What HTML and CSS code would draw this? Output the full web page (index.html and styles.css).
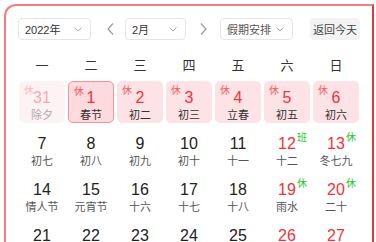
FILE: index.html
```html
<!DOCTYPE html>
<html lang="zh">
<head>
<meta charset="utf-8">
<link rel="stylesheet" href="styles.css">
</head>
<body>
<div class="frame">
  <div class="toolbar">
    <div class="select year"><span>2022年</span><svg class="chev" width="8" height="5" viewBox="0 0 8 5"><path d="M0.5 0.5 L4 4 L7.5 0.5" fill="none" stroke="#a8a8a8" stroke-width="1"/></svg></div>
    <div class="nav prev"><svg width="7" height="12" viewBox="0 0 7 12"><path d="M6 0.5 L1 6 L6 11.5" fill="none" stroke="#9a9a9a" stroke-width="1.2"/></svg></div>
    <div class="select month"><span>2月</span><svg class="chev" width="8" height="5" viewBox="0 0 8 5"><path d="M0.5 0.5 L4 4 L7.5 0.5" fill="none" stroke="#a8a8a8" stroke-width="1"/></svg></div>
    <div class="nav next"><svg width="7" height="12" viewBox="0 0 7 12"><path d="M1 0.5 L6 6 L1 11.5" fill="none" stroke="#9a9a9a" stroke-width="1.2"/></svg></div>
    <div class="select holiday"><span>假期安排</span><svg class="chev" width="8" height="5" viewBox="0 0 8 5"><path d="M0.5 0.5 L4 4 L7.5 0.5" fill="none" stroke="#a8a8a8" stroke-width="1"/></svg></div>
    <div class="today">返回今天</div>
  </div>
  <div class="weekdays">
    <span>一</span><span>二</span><span>三</span><span>四</span><span>五</span><span>六</span><span>日</span>
  </div>
  <div class="days">
    <div class="cell rest other"><i class="tag">休</i><b class="num red">31</b><em>除夕</em></div>
    <div class="cell rest selected"><i class="tag">休</i><b class="num red">1</b><em>春节</em></div>
    <div class="cell rest"><i class="tag">休</i><b class="num red">2</b><em>初二</em></div>
    <div class="cell rest"><i class="tag">休</i><b class="num red">3</b><em>初三</em></div>
    <div class="cell rest"><i class="tag">休</i><b class="num red">4</b><em>立春</em></div>
    <div class="cell rest"><i class="tag">休</i><b class="num red">5</b><em>初五</em></div>
    <div class="cell rest"><i class="tag">休</i><b class="num red">6</b><em>初六</em></div>

    <div class="cell"><b class="num">7</b><em>初七</em></div>
    <div class="cell"><b class="num">8</b><em>初八</em></div>
    <div class="cell"><b class="num">9</b><em>初九</em></div>
    <div class="cell"><b class="num">10</b><em>初十</em></div>
    <div class="cell"><b class="num">11</b><em>十一</em></div>
    <div class="cell"><b class="num red">12<sup>班</sup></b><em>十二</em></div>
    <div class="cell"><b class="num red">13<sup>休</sup></b><em>冬七九</em></div>

    <div class="cell"><b class="num">14</b><em>情人节</em></div>
    <div class="cell"><b class="num">15</b><em>元宵节</em></div>
    <div class="cell"><b class="num">16</b><em>十六</em></div>
    <div class="cell"><b class="num">17</b><em>十七</em></div>
    <div class="cell"><b class="num">18</b><em>十八</em></div>
    <div class="cell"><b class="num red">19<sup>休</sup></b><em>雨水</em></div>
    <div class="cell"><b class="num red">20<sup>休</sup></b><em>二十</em></div>

    <div class="cell"><b class="num">21</b><em>廿一</em></div>
    <div class="cell"><b class="num">22</b><em>廿二</em></div>
    <div class="cell"><b class="num">23</b><em>廿三</em></div>
    <div class="cell"><b class="num">24</b><em>廿四</em></div>
    <div class="cell"><b class="num">25</b><em>廿五</em></div>
    <div class="cell"><b class="num red">26</b><em>廿六</em></div>
    <div class="cell"><b class="num red">27</b><em>廿七</em></div>
  </div>
</div>
</body>
</html>
```

FILE: styles.css
```css
html, body {
  margin: 0;
  padding: 0;
  background: #fff;
  overflow: hidden;
}
body {
  font-family: "Liberation Sans", "Noto Sans CJK SC", sans-serif;
  color: #333;
}
.frame {
  margin: 4px 0 0 4px;
  width: 370px;
  height: 300px;
  border-top: 2px solid #ef7f80;
  border-left: 2px solid #ef7f80;
  border-right: 2px solid #e5393f;
  border-top-left-radius: 12px;
  padding: 12px 0 0 12px;
  box-sizing: border-box;
}
.toolbar {
  display: flex;
  align-items: center;
  height: 22px;
}
.select {
  height: 22px;
  box-sizing: border-box;
  border: 1px solid #e6e6e6;
  border-radius: 4px;
  display: flex;
  align-items: center;
  justify-content: space-between;
  padding: 0 8px 0 6px;
  font-size: 11px;
  color: #333;
}
.year { width: 73px; }
.month { width: 61px; }
.holiday { width: 73px; color: #555; }
.nav {
  width: 34px;
  height: 22px;
  display: flex;
  align-items: center;
  justify-content: center;
}
.prev { padding-left: 4px; box-sizing: border-box; }
.today {
  margin-left: 17px;
  width: 50px;
  height: 22px;
  border-radius: 4px;
  background: #f3f3f3;
  font-size: 11px;
  color: #444;
  display: flex;
  align-items: center;
  justify-content: center;
}
.weekdays, .days {
  display: grid;
  grid-template-columns: repeat(7, 46px);
  column-gap: 3px;
  margin-left: 1px;
}
.weekdays {
  margin-top: 16px;
  height: 20px;
  align-items: center;
  font-size: 13px;
  color: #333;
}
.weekdays span { text-align: center; line-height: 20px; }
.days {
  margin-top: 5px;
  row-gap: 4px;
}
.cell {
  position: relative;
  height: 42px;
  box-sizing: border-box;
  border-radius: 5px;
  padding-top: 8px;
  display: flex;
  flex-direction: column;
  align-items: center;
}
.cell.rest { background: #fde3e5; }
.cell.selected {
  background: #fcdadd;
  border: 1px solid #f09495;
  padding-top: 7px;
}
.cell.other { opacity: 0.42; }
.num {
  position: relative;
  font-weight: normal;
  font-size: 16px;
  line-height: 18px;
  color: #222;
}
.num.red { color: #f5303a; }
.num sup {
  position: absolute;
  left: 100%;
  top: -3px;
  margin-left: 1px;
  font-size: 10px;
  line-height: 12px;
  color: #2cc62c;
  vertical-align: baseline;
}
.cell em {
  font-style: normal;
  font-size: 11px;
  line-height: 14px;
  color: #555;
  margin-top: 1px;
}
.cell.rest em { color: #333; }
.tag {
  position: absolute;
  left: 5px;
  top: 4px;
  font-style: normal;
  font-size: 10px;
  line-height: 12px;
  color: #f56062;
}
```
